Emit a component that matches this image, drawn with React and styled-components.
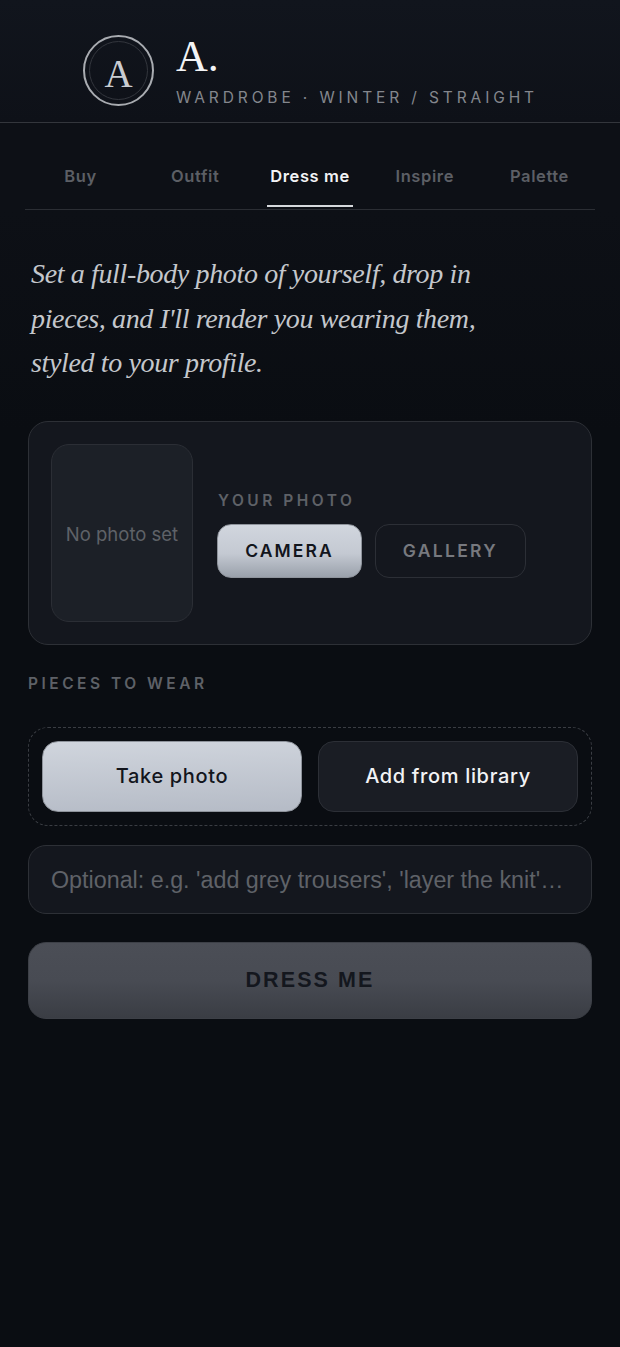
import React from 'react';
import styled, { createGlobalStyle } from 'styled-components';

const GlobalStyle = createGlobalStyle`
    html, body {
        margin: 0;
        padding: 0;
        background: #0a0d12;
    }
    * {
        box-sizing: border-box;
    }
`;

const Page = styled.div`
    width: 620px;
    min-height: 1347px;
    background: #0a0d12;
    font-family: Inter, "Liberation Sans", sans-serif;
`;

const Header = styled.header`
    height: 123px;
    padding: 35px 0 0 83px;
    display: flex;
    gap: 22px;
    align-items: flex-start;
    background: linear-gradient(180deg, #11151d 0%, #0e1118 100%);
    border-bottom: 1px solid #33363c;
`;

const Avatar = styled.div`
    width: 71px;
    height: 71px;
    flex: none;
    border-radius: 50%;
    border: 2px solid #a9acb1;
    display: flex;
    align-items: center;
    justify-content: center;
`;

const AvatarInner = styled.div`
    width: 59px;
    height: 59px;
    border-radius: 50%;
    border: 1px solid #33363d;
    display: flex;
    align-items: center;
    justify-content: center;
    padding-top: 5px;
    color: #c9ccd1;
    font-family: "Liberation Serif", serif;
    font-size: 39px;
    line-height: 1;
`;

const Brand = styled.div`
    display: flex;
    flex-direction: column;
`;

const BrandName = styled.div`
    color: #f2f3f5;
    font-family: "Liberation Serif", serif;
    font-size: 44px;
    line-height: 44px;
    height: 53px;
`;

const BrandSub = styled.div`
    color: #84878d;
    font-size: 15.5px;
    line-height: 20px;
    letter-spacing: 3.88px;
    white-space: nowrap;
`;

const TabsWrap = styled.div`
    padding: 0 25px;
    background: #0d1016;
`;

const Tabs = styled.nav`
    height: 87px;
    display: grid;
    grid-template-columns: repeat(5, 114.75px);
    justify-content: center;
    border-bottom: 1px solid #2b2e34;
`;

const Tab = styled.div`
    display: flex;
    justify-content: center;
    position: relative;
    padding-top: 42px;
    font-size: 16.5px;
    line-height: 22px;
    font-weight: 600;
    letter-spacing: 0.6px;
    color: ${props => (props.$active ? '#f2f3f5' : '#5c5f65')};

    &::after {
        content: '';
        display: ${props => (props.$active ? 'block' : 'none')};
        position: absolute;
        left: 14.4px;
        right: 14.4px;
        bottom: 2px;
        height: 2px;
        background: #d5d8dc;
    }
`;

const Content = styled.main`
    padding: 0 28px;
    background: linear-gradient(180deg, #0d1016 0%, #0a0d12 220px);
`;

const Intro = styled.p`
    margin: 0;
    padding: 42px 0 35px 3px;
    color: #c4c7cc;
    font-family: "Liberation Serif", serif;
    font-style: italic;
    font-size: 28px;
    line-height: 44.5px;
    letter-spacing: -0.36px;
`;

const PhotoCard = styled.section`
    height: 224px;
    padding: 22px;
    display: flex;
    align-items: center;
    gap: 24px;
    background: #14171e;
    border: 1px solid #2d3036;
    border-radius: 20px;
`;

const PhotoSlot = styled.div`
    width: 142px;
    height: 178px;
    flex: none;
    display: flex;
    align-items: center;
    justify-content: center;
    padding-top: 2px;
    background: #1c2027;
    border: 1px solid #2b2e35;
    border-radius: 18px;
    color: #5f6268;
    font-size: 18.5px;
    white-space: nowrap;
`;

const PhotoSide = styled.div`
    display: flex;
    flex-direction: column;
    gap: 12px;
    padding-top: 2px;
`;

const Label = styled.div`
    color: #5e6167;
    font-size: 15.5px;
    line-height: 22px;
    font-weight: 600;
    letter-spacing: 3.5px;
`;

const PhotoLabel = styled(Label)`
    padding-left: 1px;
`;

const SmallButtons = styled.div`
    display: flex;
    gap: 13px;
`;

const SmallButton = styled.div`
    height: 54px;
    width: ${props => props.$width}px;
    display: flex;
    align-items: center;
    justify-content: center;
    border-radius: 14px;
    font-size: 17.5px;
    font-weight: 600;
    letter-spacing: ${props => (props.$primary ? '2.1px' : '2.3px')};
    color: ${props => (props.$primary ? '#12151c' : '#77797f')};
    background: ${props => (props.$primary
        ? 'linear-gradient(180deg, #d1d6de 0%, #c4c9d2 55%, #9aa1ab 100%)'
        : 'transparent')};
    border: 1px solid ${props => (props.$primary ? '#8e939b' : '#2c2f36')};
`;

const PiecesLabel = styled(Label)`
    margin: 28px 0 32px;
`;

const DropZone = styled.div`
    height: 99px;
    padding: 13px;
    display: grid;
    grid-template-columns: 1fr 1fr;
    gap: 16px;
    border: 1px dashed #3a3d43;
    border-radius: 20px;
`;

const PieceButton = styled.div`
    display: flex;
    align-items: center;
    justify-content: center;
    border-radius: 16px;
    font-size: 20px;
    font-weight: 550;
    letter-spacing: 0.65px;
    color: ${props => (props.$primary ? '#12151c' : '#f2f3f5')};
    background: ${props => (props.$primary
        ? 'linear-gradient(178deg, #d0d5dd 0%, #b5bbc6 100%)'
        : '#1a1d24')};
    border: 1px solid ${props => (props.$primary ? '#8e939b' : '#2c2f36')};
`;

const NoteInput = styled.input`
    display: block;
    width: 100%;
    height: 69px;
    margin-top: 19px;
    padding: 2px 22px 0;
    background: #14171e;
    border: 1px solid #2d3036;
    border-radius: 18px;
    outline: none;
    color: #f2f3f5;
    font-family: "Liberation Sans", Arial, sans-serif;
    font-size: 23.3px;
    text-overflow: ellipsis;

    &::placeholder {
        color: #5f6268;
        opacity: 1;
    }
`;

const DressButton = styled.div`
    height: 77px;
    margin-top: 28px;
    display: flex;
    align-items: center;
    justify-content: center;
    border-radius: 18px;
    background: linear-gradient(180deg, #4b4e56 0%, #484b53 50%, #3a3d44 100%);
    border: 1px solid #3d4047;
    color: #14171e;
    font-family: "Liberation Sans", Arial, sans-serif;
    font-size: 21.5px;
    font-weight: 700;
    letter-spacing: 2.1px;
`;

const tabs = ['Buy', 'Outfit', 'Dress me', 'Inspire', 'Palette'];

const App = () => {
    return (
        <Page>
            <GlobalStyle />
            <Header>
                <Avatar>
                    <AvatarInner>A</AvatarInner>
                </Avatar>
                <Brand>
                    <BrandName>A.</BrandName>
                    <BrandSub>WARDROBE · WINTER / STRAIGHT</BrandSub>
                </Brand>
            </Header>
            <TabsWrap>
                <Tabs>
                    {tabs.map(tab => (
                        <Tab key={tab} $active={tab === 'Dress me'}>{tab}</Tab>
                    ))}
                </Tabs>
            </TabsWrap>
            <Content>
                <Intro>
                    Set a full-body photo of yourself, drop in<br />
                    pieces, and I'll render you wearing them,<br />
                    styled to your profile.
                </Intro>
                <PhotoCard>
                    <PhotoSlot>No photo set</PhotoSlot>
                    <PhotoSide>
                        <PhotoLabel>YOUR PHOTO</PhotoLabel>
                        <SmallButtons>
                            <SmallButton $primary $width={145}>CAMERA</SmallButton>
                            <SmallButton $width={151}>GALLERY</SmallButton>
                        </SmallButtons>
                    </PhotoSide>
                </PhotoCard>
                <PiecesLabel>PIECES TO WEAR</PiecesLabel>
                <DropZone>
                    <PieceButton $primary>Take photo</PieceButton>
                    <PieceButton>Add from library</PieceButton>
                </DropZone>
                <NoteInput placeholder="Optional: e.g. 'add grey trousers', 'layer the knit'…" />
                <DressButton>DRESS ME</DressButton>
            </Content>
        </Page>
    );
};

export default App;
